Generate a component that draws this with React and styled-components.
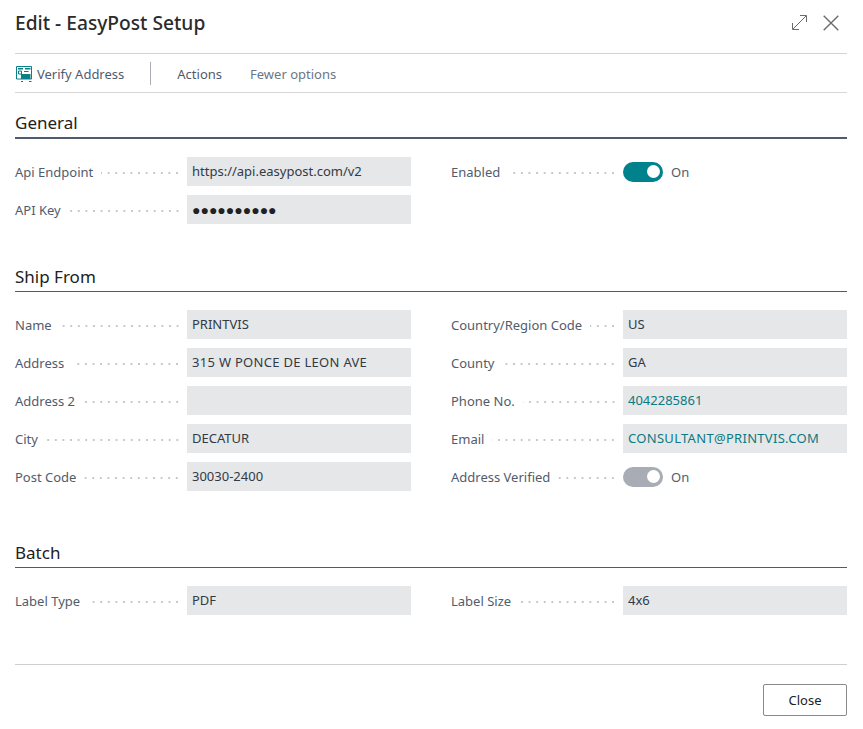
import React from 'react';
import styled, { createGlobalStyle } from 'styled-components';

const GlobalStyle = createGlobalStyle`
  html, body {
    margin: 0;
    padding: 0;
    background: #fff;
    font-family: "Noto Sans", "Open Sans", sans-serif;
  }
`;

const Dialog = styled.div`
  width: 863px;
  height: 729px;
  box-sizing: border-box;
  padding: 0 16px 0 15px;
  display: flex;
  flex-direction: column;
  overflow: hidden;
`;

const Header = styled.header`
  height: 54px;
  display: flex;
  align-items: center;
  justify-content: space-between;
  padding-bottom: 8px;
  box-sizing: border-box;
  border-bottom: 1px solid #d3d3d3;
`;

const Title = styled.h1`
  margin: 0;
  font-size: 19.2px;
  font-weight: 500;
  color: #2b2b2b;
`;

const WindowButtons = styled.div`
  display: flex;
  align-items: center;
  gap: 16px;
  margin-right: 8px;
  color: #6b6b6b;
`;

const Toolbar = styled.nav`
  height: 39px;
  box-sizing: border-box;
  display: flex;
  align-items: center;
  padding-top: 1px;
  border-bottom: 1px solid #d8d8d8;
  font-size: 13px;
`;

const VerifyAction = styled.span`
  display: flex;
  align-items: center;
  gap: 5px;
  margin-left: 1px;
  color: #505c6d;
`;

const Divider = styled.span`
  width: 1px;
  height: 23px;
  margin: 0 26px;
  background: #a9adb3;
`;

const MenuItem = styled.span`
  margin-right: 28px;
  color: ${p => (p.$muted ? '#6b7686' : '#505c6d')};
`;

const Section = styled.section`
  margin-top: ${p => p.$top}px;
`;

const SectionTitle = styled.h2`
  margin: 0;
  height: 31px;
  line-height: ${p => (p.$thick ? 30 : 32)}px;
  box-sizing: border-box;
  font-size: 17px;
  font-weight: 400;
  color: #212121;
  border-bottom: ${p => (p.$thick ? '2px solid #505c6d' : '1px solid #505c6d')};
`;

const Columns = styled.div`
  display: grid;
  grid-template-columns: 396px 396px;
  column-gap: 40px;
  margin-top: ${p => p.$top}px;
`;

const Column = styled.div`
  display: flex;
  flex-direction: column;
  gap: 9px;
`;

const Field = styled.div`
  display: grid;
  grid-template-columns: 172px 224px;
  height: 29px;
  align-items: center;
`;

const LabelCell = styled.div`
  display: flex;
  align-items: center;
  padding-right: 6px;
  box-sizing: border-box;
`;

const Label = styled.span`
  font-size: 13px;
  color: #505c6d;
  white-space: nowrap;
`;

const Leader = styled.span`
  flex: 1;
  height: 2px;
  margin: 2px 0 0 8px;
  background-image: radial-gradient(circle, #c4c8cd 0.9px, transparent 1px);
  background-size: 7.6px 2px;
  background-position: right;
`;

const Value = styled.div`
  height: 29px;
  line-height: 29px;
  box-sizing: border-box;
  padding-left: 5px;
  background: #e6e7e9;
  font-size: 13px;
  letter-spacing: ${p => (p.$wide ? '0.3px' : '0')};
  white-space: nowrap;
  overflow: hidden;
  color: ${p => (p.$link ? '#0a7a82' : '#323a45')};
`;

const Password = styled(Value)`
  font-size: 14px;
  color: #212121;
`;

const ToggleWrap = styled.div`
  display: flex;
  align-items: center;
  gap: 8px;
  font-size: 13px;
  color: #505c6d;
`;

const Track = styled.span`
  width: 40px;
  height: 20px;
  border-radius: 10px;
  display: flex;
  align-items: center;
  justify-content: flex-end;
  padding-right: 3px;
  box-sizing: border-box;
  background: ${p => (p.$disabled ? '#a8adb5' : '#00828c')};
`;

const Knob = styled.span`
  width: 13px;
  height: 13px;
  border-radius: 50%;
  background: #fff;
`;

const Footer = styled.footer`
  margin-top: 49px;
  height: 65px;
  box-sizing: border-box;
  border-top: 1px solid #cfcfcf;
  display: flex;
  justify-content: flex-end;
  padding-top: 19px;
`;

const CloseButton = styled.button`
  width: 84px;
  height: 32px;
  box-sizing: border-box;
  border: 1px solid #8a8a8a;
  border-radius: 2px;
  background: #fff;
  font-family: inherit;
  font-size: 13px;
  color: #212121;
  padding: 0;
`;

const ExpandIcon = () => (
  <svg width="15" height="15" viewBox="0 0 15 15" fill="none" stroke="currentColor" strokeWidth="1">
    <path d="M1 14 14 1M8 .5H14.500V7M.5 8V14.500H7" />
  </svg>
);

const CloseIcon = () => (
  <svg width="16" height="16" viewBox="0 0 16 16" fill="none" stroke="currentColor" strokeWidth="1.4">
    <path d="M.7.7 15.300 15.300M15.300.7.7 15.300" />
  </svg>
);

const VerifyIcon = () => (
  <svg width="16" height="16" viewBox="0 0 16 16" fill="none">
    <path d="M.5.5h15v12.5H.5z" stroke="#0b7f87" />
    <path d="M2 2h5v1.400H2zM9 2h5.500v1.400H9z" fill="#0b7f87" />
    <path d="M2.500 5h3v3h-3z" stroke="#0b7f87" />
    <path d="M5 8h9.500v5H5z" fill="#0b7f87" />
    <path d="M8 5.500h4.500" stroke="#0b7f87" />
    <path d="M13 15.500h2.500M5 15.500h2" stroke="#0b7f87" />
  </svg>
);

const Row = ({ label, children }) => (
  <Field>
    <LabelCell>
      <Label>{label}</Label>
      <Leader />
    </LabelCell>
    {children}
  </Field>
);

const Toggle = ({ disabled }) => (
  <ToggleWrap>
    <Track $disabled={disabled}>
      <Knob />
    </Track>
    On
  </ToggleWrap>
);

export default function App() {
  return (
    <Dialog>
      <GlobalStyle />
      <Header>
        <Title>Edit - EasyPost Setup</Title>
        <WindowButtons>
          <ExpandIcon />
          <CloseIcon />
        </WindowButtons>
      </Header>

      <Toolbar>
        <VerifyAction>
          <VerifyIcon />
          Verify Address
        </VerifyAction>
        <Divider />
        <MenuItem>Actions</MenuItem>
        <MenuItem $muted>Fewer options</MenuItem>
      </Toolbar>

      <Section $top={15}>
        <SectionTitle $thick>General</SectionTitle>
        <Columns $top={18}>
          <Column>
            <Row label="Api Endpoint"><Value>https://api.easypost.com/v2</Value></Row>
            <Row label="API Key"><Password>●●●●●●●●●●</Password></Row>
          </Column>
          <Column>
            <Row label="Enabled"><Toggle /></Row>
          </Column>
        </Columns>
      </Section>

      <Section $top={37}>
        <SectionTitle>Ship From</SectionTitle>
        <Columns $top={18}>
          <Column>
            <Row label="Name"><Value>PRINTVIS</Value></Row>
            <Row label="Address"><Value $wide>315 W PONCE DE LEON AVE</Value></Row>
            <Row label="Address 2"><Value /></Row>
            <Row label="City"><Value>DECATUR</Value></Row>
            <Row label="Post Code"><Value>30030-2400</Value></Row>
          </Column>
          <Column>
            <Row label="Country/Region Code"><Value>US</Value></Row>
            <Row label="County"><Value>GA</Value></Row>
            <Row label="Phone No."><Value $link>4042285861</Value></Row>
            <Row label="Email"><Value $link $wide>CONSULTANT@PRINTVIS.COM</Value></Row>
            <Row label="Address Verified"><Toggle disabled /></Row>
          </Column>
        </Columns>
      </Section>

      <Section $top={46}>
        <SectionTitle>Batch</SectionTitle>
        <Columns $top={18}>
          <Column>
            <Row label="Label Type"><Value>PDF</Value></Row>
          </Column>
          <Column>
            <Row label="Label Size"><Value>4x6</Value></Row>
          </Column>
        </Columns>
      </Section>

      <Footer>
        <CloseButton>Close</CloseButton>
      </Footer>
    </Dialog>
  );
}
